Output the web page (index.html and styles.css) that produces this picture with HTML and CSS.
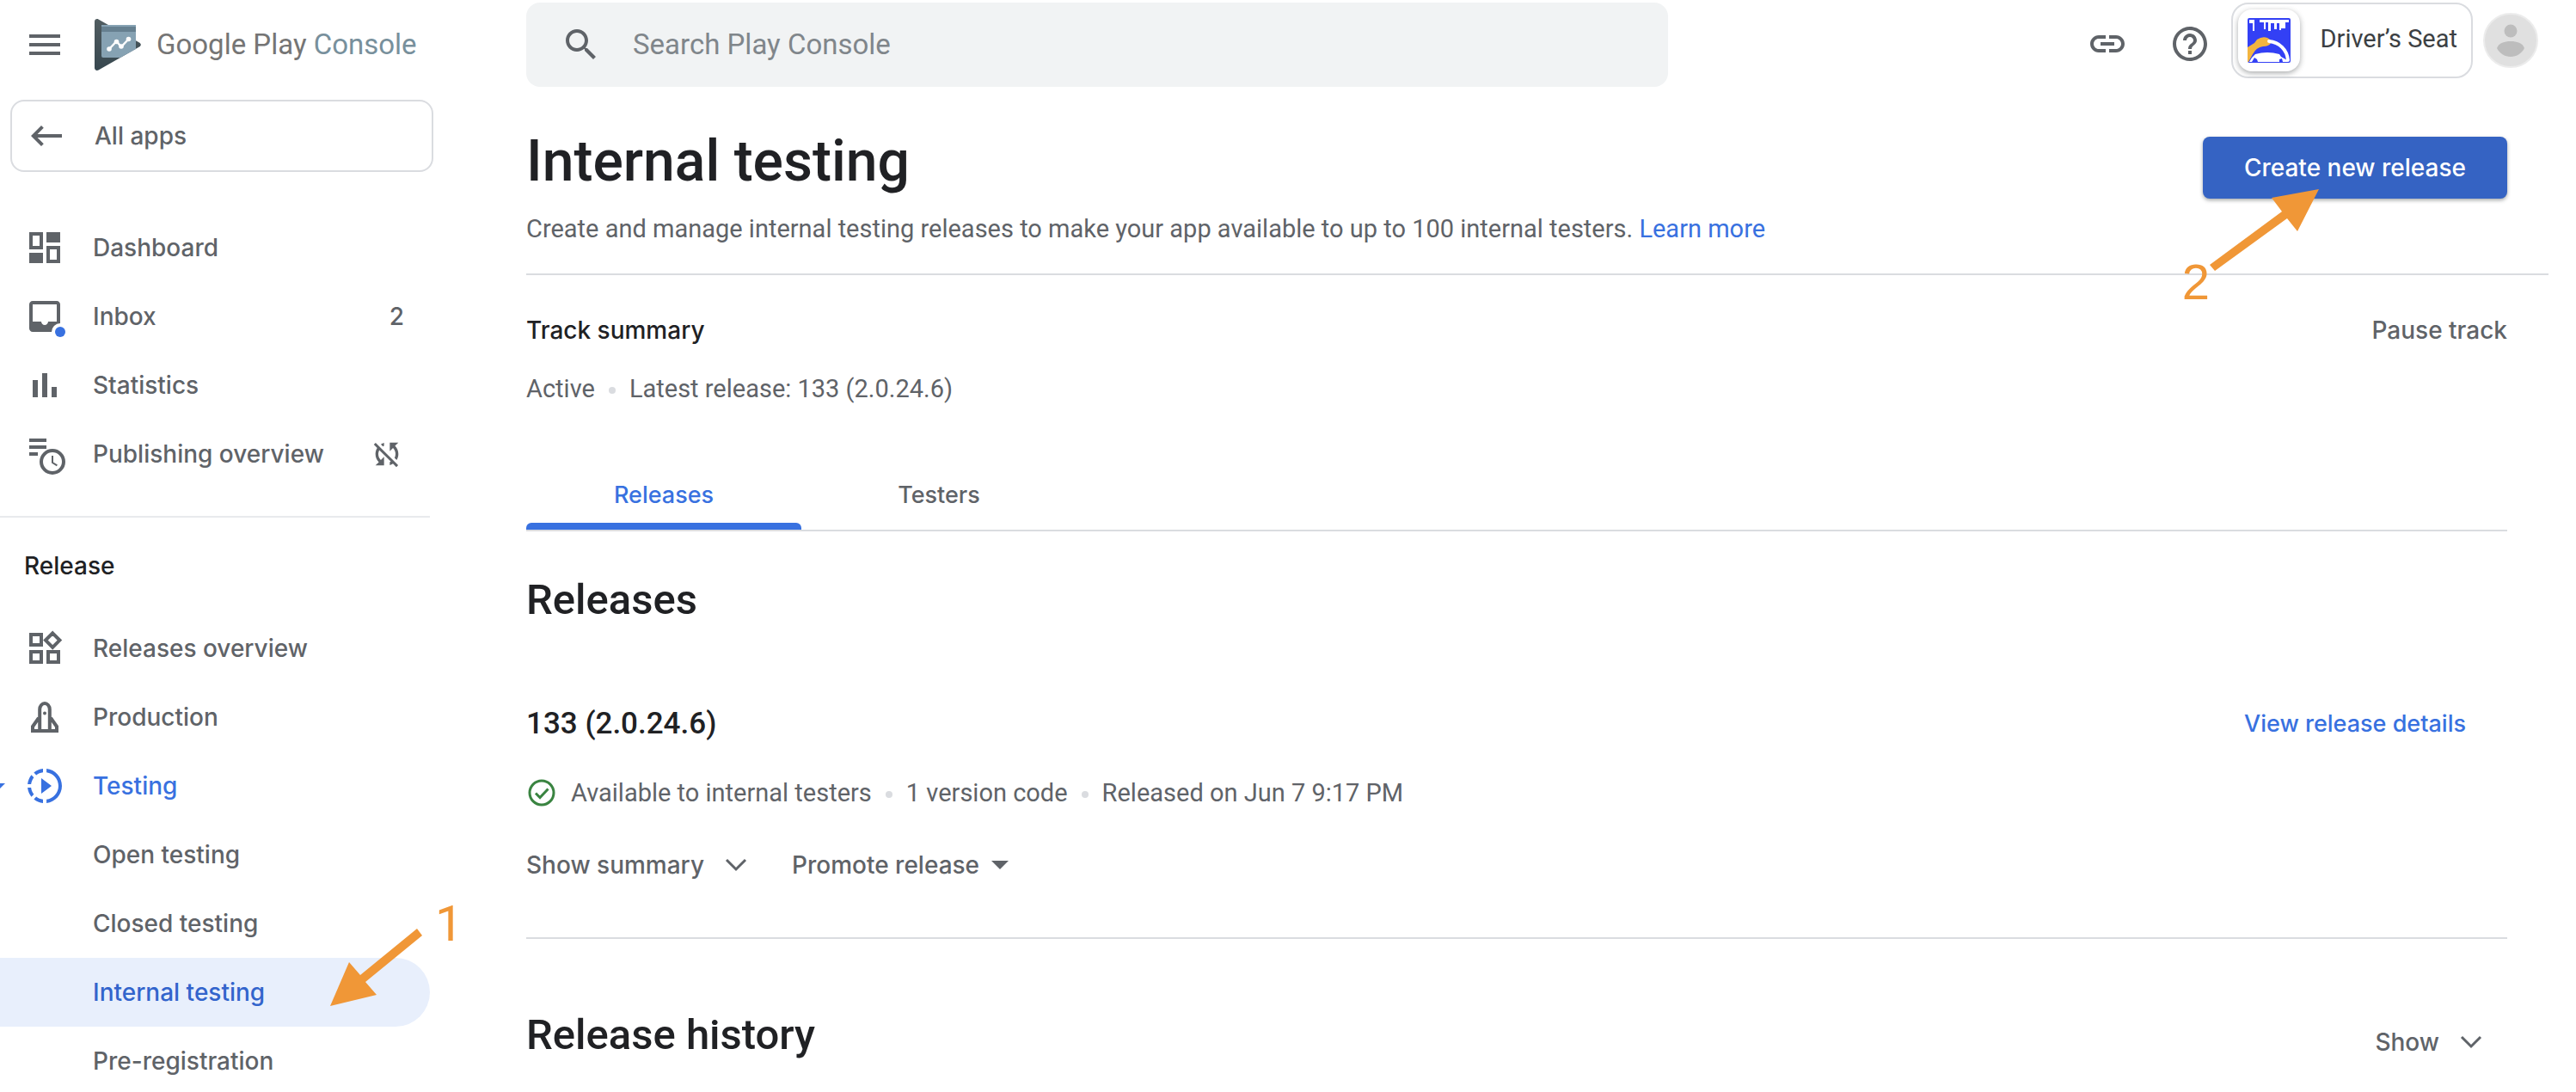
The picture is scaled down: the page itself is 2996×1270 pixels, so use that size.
FILE: index.html
```html
<!DOCTYPE html>
<html lang="en">
<head>
<meta charset="utf-8">
<title>Internal testing | Google Play Console</title>
<link rel="stylesheet" href="styles.css">
</head>
<body>
<div class="app">
  <aside class="sidebar">
    <div class="brand">
      <button class="icon-button" type="button" aria-label="Menu">
        <svg class="icon" viewBox="0 0 24 24"><path d="M3 18h18v-2H3v2zm0-5h18v-2H3v2zm0-7v2h18V6H3z"/></svg>
      </button>
      <a class="logo" href="#">
        <svg class="logo-mark" viewBox="0 0 54 60" aria-hidden="true">
          <defs><linearGradient id="mark" x1="0" y1="0" x2="0" y2="1"><stop offset="0" stop-color="#515d61"/><stop offset="1" stop-color="#37474f"/></linearGradient></defs>
          <path fill="url(#mark)" d="M0 3C0 .6 2.400-.6 4.500.5L52 27.500c2.400 1.400 2.400 3.700 0 5L4.500 59.500C2.400 60.600 0 59.400 0 57z"/>
          <path fill="#86a2b3" d="M8 7h40v28L30 45H10q-2 0-2-2z"/>
          <path fill="#668090" d="M8 9h40v6H8z"/>
          <path fill="none" stroke="#fff" stroke-width="2.500" stroke-linejoin="round" d="M17 35l8.500-9 5.500 6.500 8.500-9"/>
          <g fill="#fff"><circle cx="17" cy="35" r="2.800"/><circle cx="25.500" cy="26.500" r="2.800"/><circle cx="31" cy="32" r="2.800"/><circle cx="39.500" cy="23.500" r="2.800"/></g>
        </svg>
        <span class="logo-text">Google Play <span class="logo-product">Console</span></span>
      </a>
    </div>

    <a class="all-apps" href="#">
      <svg class="icon" viewBox="0 0 24 24"><path d="M21 11H6.800l3.600-3.600L9 6l-6 6 6 6 1.400-1.400L6.800 13H21z"/></svg>
      <span>All apps</span>
    </a>

    <nav aria-label="Main">
      <ul class="nav nav-main">
        <li><a class="nav-item" href="#"><svg class="icon" viewBox="0 0 24 24"><path d="M9 5v6H5V5h4m2-2H3v10h8V3zm10 0h-8v6h8V3zm-2 10v6h-4v-6h4m2-2h-8v10h8V11zm-10 4H3v6h8v-6z"/></svg><span>Dashboard</span></a></li>
        <li><a class="nav-item" href="#"><svg class="icon icon-badged" viewBox="0 0 24 24"><path d="M19 3H5c-1.100 0-2 .9-2 2v14c0 1.100.9 2 2 2h14c1.100 0 2-.9 2-2V5c0-1.100-.9-2-2-2zm0 12h-5c0 1.100-.9 2-2 2s-2-.9-2-2H5V5h14v10z"/><circle cx="21" cy="21" r="5" fill="#fff"/><circle cx="21" cy="21" r="3" fill="#3871e0"/></svg><span>Inbox</span><span class="nav-end">2</span></a></li>
        <li><a class="nav-item" href="#"><svg class="icon" viewBox="0 0 24 24"><path d="M5 9h3v10H5zM10.500 5h3v14h-3zM16 13h3v6h-3z"/></svg><span>Statistics</span></a></li>
        <li><a class="nav-item" href="#"><svg class="icon icon-badged" viewBox="0 0 24 24"><path d="M3 3h10v2H3zM3 7h10v2H3zM3 11h5v2H3z"/><circle cx="16.500" cy="16.500" r="8.300" fill="#fff"/><circle cx="16.500" cy="16.500" r="6.500" fill="none" stroke="currentColor" stroke-width="2"/><path fill="none" stroke="currentColor" d="M16.500 13v4l2.700 1.700"/></svg><span>Publishing overview</span>
          <svg class="icon-small nav-end" viewBox="0 0 24 24"><path d="M10 6.350V4.260c-.8.210-1.550.540-2.230.960l1.460 1.460c.25-.12.5-.24.77-.33zm-7.140-.94l2.360 2.360C4.450 8.990 4 10.440 4 12c0 2.210.91 4.200 2.360 5.640L4 20h6v-6l-2.240 2.240C6.680 15.150 6 13.660 6 12c0-1 .25-1.940.68-2.770l8.080 8.080c-.25.13-.5.25-.77.34v2.090c.8-.21 1.550-.54 2.230-.96l2.360 2.360 1.270-1.270L4.140 4.140 2.860 5.410zM20 4h-6v6l2.240-2.240C17.320 8.850 18 10.340 18 12c0 1-.25 1.940-.68 2.770l1.460 1.460C19.550 15.010 20 13.560 20 12c0-2.210-.91-4.200-2.360-5.640L20 4z"/></svg></a></li>
      </ul>
      <h2 class="nav-heading">Release</h2>
      <ul class="nav">
        <li><a class="nav-item" href="#"><svg class="icon" viewBox="0 0 24 24"><path fill="none" stroke="currentColor" stroke-width="2" d="M4 4h6v6H4zM4 14h6v6H4zM14 14h6v6h-6zM16.600 3.200l4.100 4.100-4.100 4.100-4.100-4.100z"/></svg><span>Releases overview</span></a></li>
        <li><a class="nav-item" href="#"><svg class="icon" viewBox="0 0 24 24"><path fill="none" stroke="currentColor" stroke-width="2" d="M9.100 20V7.500C9.100 5.500 10.500 4 12 4s2.900 1.500 2.900 3.500V20M8.500 12.500L5 17.500V20h14v-2.500l-3.500-5"/><circle cx="12" cy="9.700" r="1"/></svg><span>Production</span></a></li>
        <li><a class="nav-item nav-open" href="#"><svg class="nav-caret" viewBox="0 0 12 6" aria-hidden="true"><path d="M0 0h12L6 6z"/></svg><svg class="icon" viewBox="0 0 24 24"><path d="M10 7.500v9l6-4.500zM11 4.070V2.050c-2.010.2-3.840 1-5.320 2.210L7.100 5.690c1.110-.86 2.440-1.440 3.900-1.620zM5.690 7.100L4.260 5.680C3.050 7.160 2.250 8.990 2.050 11h2.020c.18-1.460.76-2.790 1.620-3.900zM4.070 13H2.050c.2 2.010 1 3.840 2.210 5.320l1.430-1.430c-.86-1.100-1.440-2.430-1.620-3.890zm1.610 6.740C7.160 20.950 9 21.750 11 21.950v-2.020c-1.460-.18-2.790-.76-3.900-1.620l-1.420 1.430zM22 12c0 5.160-3.920 9.420-8.950 9.950v-2.020C16.970 19.410 20 16.050 20 12s-3.030-7.410-6.950-7.930V2.050C18.080 2.580 22 6.840 22 12z"/></svg><span>Testing</span></a>
          <ul class="nav subnav">
            <li><a class="nav-item" href="#">Open testing</a></li>
            <li><a class="nav-item" href="#">Closed testing</a></li>
            <li class="step-anchor"><a class="nav-item nav-selected" href="#" aria-current="page">Internal testing</a>
              <svg class="step-arrow step-arrow-one" viewBox="0 0 108 90" aria-hidden="true"><path d="M0 90L22 39l13 15L101 0l6 8L41 62l13 15z"/></svg>
              <span class="step-number step-number-one">1</span></li>
            <li><a class="nav-item" href="#">Pre-registration</a></li>
          </ul></li>
      </ul>
    </nav>
  </aside>

  <div class="content">
    <header class="topbar">
      <label class="search">
        <svg class="icon" viewBox="0 0 24 24" aria-hidden="true"><path d="M15.500 14h-.79l-.28-.27C15.410 12.590 16 11.110 16 9.500 16 5.910 13.090 3 9.500 3S3 5.910 3 9.500 5.910 16 9.500 16c1.610 0 3.090-.59 4.230-1.570l.27.28v.79l5 4.990L20.490 19l-4.990-5zm-6 0C7.010 14 5 11.990 5 9.500S7.010 5 9.500 5 14 7.010 14 9.500 11.990 14 9.500 14z"/></svg>
        <input type="search" placeholder="Search Play Console" aria-label="Search Play Console">
      </label>
      <div class="tools">
        <button class="icon-button" type="button" aria-label="Copy link"><svg class="icon" viewBox="0 0 24 24"><path d="M17 7h-4v2h4c1.650 0 3 1.350 3 3s-1.350 3-3 3h-4v2h4c2.760 0 5-2.240 5-5s-2.240-5-5-5zm-6 8H7c-1.650 0-3-1.350-3-3s1.350-3 3-3h4V7H7c-2.760 0-5 2.240-5 5s2.240 5 5 5h4v-2zm-3-4h8v2H8v-2z"/></svg></button>
        <button class="icon-button" type="button" aria-label="Help"><svg class="icon" viewBox="0 0 24 24"><path d="M11 18h2v-2h-2v2zm1-16C6.480 2 2 6.480 2 12s4.480 10 10 10 10-4.480 10-10S17.520 2 12 2zm0 18c-4.410 0-8-3.590-8-8s3.590-8 8-8 8 3.590 8 8-3.590 8-8 8zm0-14c-2.210 0-4 1.790-4 4h2c0-1.100.9-2 2-2s2 .9 2 2c0 2-3 1.750-3 5h2c0-2.250 3-2.500 3-5 0-2.210-1.790-4-4-4z"/></svg></button>
      </div>
      <button class="account" type="button">
        <span class="app-tile"><svg class="app-art" viewBox="0 0 50 52" aria-hidden="true">
          <rect width="50" height="52" rx="2" fill="#3340f5"/>
          <path fill="#fff" d="M2 2h6v13H6V6H2zM14 2h34v3h-4v7h-5v2h-2V6h-3v7h-3V6h-4v9h-3V5h-3v8h-2V5h-5z"/>
          <path fill="#f3b53f" d="M0 34l8-5 3-4q6-4 12-2 5 2 4 6-2 4-9 4-8 1-12 9L1 51H0z"/>
          <path fill="none" stroke="#fff" stroke-width="4" stroke-linecap="round" d="M25 27c12 1 21 10 22 22"/>
          <path fill="#fff" d="M2 51q2-5 7-9 14-4 28 0l2 3 7 4v2h-5l-1-4-3 1v3H12l-1-3-3-2-3 5z"/>
        </svg></span>
        <span>Driver’s Seat</span>
      </button>
      <button class="avatar" type="button" aria-label="Account"><svg viewBox="0 0 64 64" aria-hidden="true"><circle cx="32" cy="32" r="31" fill="#e0e0e0" stroke="#ececec" stroke-width="2"/><circle cx="32" cy="21" r="7.500" fill="#bdbdbd"/><path fill="#bdbdbd" d="M16 41c2-6 9-8 16-8s14 2 16 8c-3 6-9 10-16 10s-13-4-16-10z"/></svg></button>
    </header>

    <main class="page">
      <div class="page-head step-anchor">
        <div class="page-intro">
          <h1>Internal testing</h1>
          <p>Create and manage internal testing releases to make your app available to up to 100 internal testers. <a href="#">Learn more</a></p>
        </div>
        <button class="primary" type="button">Create new release</button>
        <svg class="step-arrow step-arrow-two" viewBox="0 0 127 95" aria-hidden="true"><path d="M127 0L72 10l12 16L0 88l6 7L90 34l12 15z"/></svg>
        <span class="step-number step-number-two">2</span>
      </div>

      <section class="track">
        <div class="split"><h2 class="label-heading">Track summary</h2><button class="text-button" type="button">Pause track</button></div>
        <p class="facts"><span>Active</span><span>Latest release: 133 (2.0.24.6)</span></p>
      </section>

      <div class="tabs" role="tablist">
        <button class="tab tab-active" role="tab" aria-selected="true" type="button">Releases</button>
        <button class="tab" role="tab" aria-selected="false" type="button">Testers</button>
      </div>

      <section class="releases">
        <h2>Releases</h2>
        <article class="release">
          <div class="split release-head"><h3>133 (2.0.24.6)</h3><a href="#">View release details</a></div>
          <div class="status">
            <svg class="status-icon" viewBox="0 0 36 36" aria-hidden="true"><circle cx="18" cy="18" r="14" fill="none" stroke="#3a8441" stroke-width="3"/><path fill="none" stroke="#3a8441" stroke-width="3" d="M11 18.500l5 5 9.500-10"/></svg>
            <p class="facts"><span>Available to internal testers</span><span>1 version code</span><span>Released on Jun 7 9:17 PM</span></p>
          </div>
          <div class="actions">
            <button class="text-button" type="button">Show summary<svg class="chevron" viewBox="0 0 26 16" aria-hidden="true"><path fill="none" stroke="currentColor" stroke-width="3" d="M2 2l11 11L24 2"/></svg></button>
            <button class="text-button menu-button" type="button">Promote release<svg class="triangle" viewBox="0 0 20 10" aria-hidden="true"><path d="M0 0h20L10 10z"/></svg></button>
          </div>
        </article>
      </section>

      <section class="history split">
        <h2>Release history</h2>
        <button class="text-button" type="button">Show<svg class="chevron" viewBox="0 0 26 16" aria-hidden="true"><path fill="none" stroke="currentColor" stroke-width="3" d="M2 2l11 11L24 2"/></svg></button>
      </section>
    </main>
  </div>
</div>
</body>
</html>
```

FILE: styles.css
```css
:root {
  --text: #202124;
  --muted: #5f6368;
  --blue: #3871e0;
  --line: #dadce0;
  --mark: #f09737;
  --label: Inter, Roboto, sans-serif;
}

* { box-sizing: border-box; }

body {
  margin: 0;
  overflow: hidden;
  background: #fff;
  color: var(--muted);
  font: 400 29px/40px Roboto, "Liberation Sans", sans-serif;
}

h1, h2, h3, p, ul { margin: 0; padding: 0; }
ul { list-style: none; }
a { color: var(--blue); text-decoration: none; }
svg { display: block; flex: none; fill: currentColor; }

button {
  margin: 0;
  padding: 0;
  border: 0;
  background: none;
  color: inherit;
  font: inherit;
  cursor: pointer;
}

h1, h2, h3 { color: var(--text); font-weight: 500; }
h1 { font-size: 66px; line-height: 80px; }
h2 { font-size: 49px; line-height: 64px; }
h3 { font-size: 35px; line-height: 48px; }

.icon { width: 48px; height: 48px; }
.icon-small { width: 40px; height: 40px; }
.icon-badged { overflow: visible; }

.app {
  display: grid;
  grid-template-columns: 612px minmax(0, 1fr);
  height: 100vh;
}

/* Sidebar */
.sidebar { width: 504px; }

.brand {
  display: flex;
  align-items: center;
  gap: 34px;
  height: 104px;
  padding-left: 28px;
}

.logo { display: flex; align-items: center; gap: 18px; }
.logo-mark { width: 54px; height: 60px; }
.logo-text { color: #757575; font-size: 33px; white-space: nowrap; }
.logo-product { color: #78909c; }

.all-apps {
  display: flex;
  align-items: center;
  gap: 32px;
  height: 84px;
  margin: 12px 0 48px 12px;
  padding-left: 16px;
  border: 2px solid var(--line);
  border-radius: 16px;
  color: var(--muted);
  font: 500 28px/40px var(--label);
}

.nav-main {
  width: 500px;
  padding-bottom: 32px;
  border-bottom: 2px solid #e8eaed;
}

.nav-item {
  position: relative;
  display: flex;
  align-items: center;
  gap: 32px;
  width: 500px;
  height: 80px;
  padding: 0 30px 0 28px;
  color: var(--muted);
  font: 500 28px/40px var(--label);
}

.nav-end { margin-left: auto; }
.nav-open { color: var(--blue); }
.nav-caret { position: absolute; left: -6px; width: 12px; height: 6px; }
.subnav .nav-item { padding-left: 108px; }

.subnav .nav-selected {
  border-radius: 0 40px 40px 0;
  background: #e8effc;
  color: #3264cc;
}

.nav-heading {
  padding: 36px 28px;
  font: 500 28px/40px var(--label);
}

/* Top bar */
.topbar {
  display: flex;
  align-items: flex-start;
  height: 104px;
  padding: 3px 44px 0 0;
}

.search {
  display: flex;
  align-items: center;
  gap: 34px;
  flex: 0 1 1328px;
  height: 98px;
  padding-left: 40px;
  border-radius: 16px;
  background: #f1f3f4;
}

.search input {
  flex: 1;
  min-width: 0;
  border: 0;
  outline: 0;
  background: none;
  color: var(--text);
  font: 400 33px/48px Roboto, sans-serif;
}
.search input::placeholder { color: #80868b; opacity: 1; }

.tools { display: flex; align-items: center; gap: 48px; height: 96px; margin: 0 24px 0 auto; }

.account {
  display: flex;
  align-items: center;
  gap: 24px;
  height: 88px;
  padding: 0 16px 4px 6px;
  border: 2px solid var(--line);
  border-radius: 20px;
  color: #3c4043;
}

.app-tile {
  display: grid;
  place-items: center;
  width: 72px;
  height: 72px;
  margin-top: 4px;
  border-radius: 16px;
  background: #fff;
  box-shadow: 0 2px 6px rgba(60, 64, 67, .45);
}
.app-art { width: 50px; height: 52px; }

.avatar { width: 64px; height: 64px; margin: 12px 0 0 12px; }

/* Page */
.page-head {
  display: flex;
  justify-content: space-between;
  align-items: flex-start;
  height: 216px;
  margin-right: 32px;
  padding: 44px 48px 0 0;
  border-bottom: 2px solid var(--line);
}

.page-intro p { margin-top: 18px; }

.primary {
  height: 72px;
  margin-top: 11px;
  padding: 0 48px;
  border-radius: 8px;
  background: #3563c3;
  box-shadow: 0 2px 4px rgba(60, 64, 67, .45);
  color: #fff;
  font: 500 28px/40px var(--label);
}

.split { display: flex; justify-content: space-between; align-items: center; }
.label-heading { font: 500 28px/40px var(--label); }
.text-button { display: flex; align-items: center; gap: 24px; font: 500 28px/40px var(--label); }

.track { padding: 44px 80px 0 0; }
.track .facts { margin-top: 28px; }

.facts { display: flex; }
.facts span + span::before {
  content: "";
  display: inline-block;
  width: 8px;
  height: 8px;
  margin: 0 16px;
  border-radius: 50%;
  background: var(--line);
  vertical-align: 4px;
}

.tabs {
  display: flex;
  height: 86px;
  margin: 60px 80px 0 0;
  border-bottom: 2px solid var(--line);
}

.tab {
  width: 320px;
  padding-top: 12px;
  border-bottom: 8px solid transparent;
  font: 500 27px/40px var(--label);
}

.tab-active { color: var(--blue); position: relative; }
.tab-active::after {
  content: "";
  position: absolute;
  inset: auto 0 -8px;
  height: 8px;
  border-radius: 6px 6px 0 0;
  background: var(--blue);
}

.releases {
  margin-right: 80px;
  padding: 48px 0 64px;
  border-bottom: 2px solid var(--line);
}

.release { margin-top: 88px; }
.release-head { padding-right: 48px; font: 500 27px/48px var(--label); }
.release-head h3 { font-family: Roboto, sans-serif; }
.status { display: flex; align-items: center; gap: 16px; margin-top: 36px; }
.status-icon { width: 36px; height: 36px; }
.actions { display: flex; gap: 52px; margin-top: 44px; }
.menu-button { gap: 14px; }
.chevron { width: 26px; height: 16px; }
.triangle { width: 20px; height: 10px; }

.history { margin-right: 80px; padding: 80px 29px 0 0; }
.history .text-button { margin-top: 16px; }

/* Numbered pointers drawn over the page */
.step-anchor { position: relative; }
.step-arrow { position: absolute; color: var(--mark); pointer-events: none; }
.step-arrow-one { left: 384px; top: -34px; width: 108px; height: 90px; }
.step-arrow-two { right: 267px; top: 116px; width: 127px; height: 95px; }
.step-number {
  position: absolute;
  color: var(--mark);
  font: 400 58px/64px "Liberation Sans", sans-serif;
}
.step-number-one { left: 506px; top: -72px; font-family: Roboto, sans-serif; }
.step-number-two { right: 394px; top: 192px; }
```
